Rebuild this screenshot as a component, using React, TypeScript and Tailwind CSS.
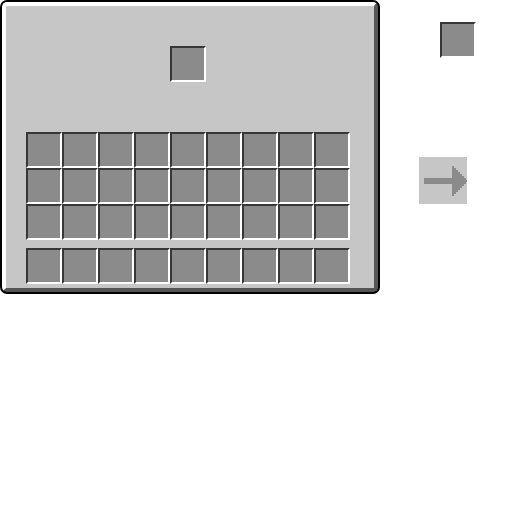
import React from "react";

function Slot() {
  return (
    <div className="w-9 h-9 box-border border-2 border-t-[#373737] border-l-[#373737] border-b-white border-r-white bg-[#8b8b8b]" />
  );
}

export default function App() {
  const rows = [0, 1, 2];
  const cols = [0, 1, 2, 3, 4, 5, 6, 7, 8];
  return (
    <div className="w-[512px] h-[512px] bg-white flex items-start">
      <div className="w-[380px] h-[294px] bg-black rounded-[7px] p-[2px] box-border">
        <div className="w-full h-full box-border border-4 border-t-white border-l-white border-b-[#555555] border-r-[#555555] rounded-[5px] bg-[#c6c6c6] pl-[20px] pt-[40px] flex flex-col">
          <div className="ml-[144px]">
            <Slot />
          </div>
          <div className="mt-[50px] flex flex-col">
            {rows.map((r) => (
              <div key={r} className="flex">
                {cols.map((c) => (
                  <Slot key={c} />
                ))}
              </div>
            ))}
          </div>
          <div className="mt-[8px] flex">
            {cols.map((c) => (
              <Slot key={c} />
            ))}
          </div>
        </div>
      </div>
      <div className="ml-[39px] flex flex-col">
        <div className="ml-[21px] mt-[22px]">
          <Slot />
        </div>
        <div className="mt-[99px] w-[48px] h-[47px] bg-[#c6c6c6]">
          <svg width="48" height="47" viewBox="0 0 48 47" shapeRendering="crispEdges">
            <rect x="5" y="21" width="28" height="6" fill="#8b8b8b" />
            <path
              d="M33 9 H35 V11 H37 V13 H39 V15 H41 V17 H43 V19 H45 V21 H47 V23 H48 V25 H47 V27 H45 V29 H43 V31 H41 V33 H39 V35 H37 V37 H35 V39 H33 Z"
              fill="#8b8b8b"
            />
          </svg>
        </div>
      </div>
    </div>
  );
}
